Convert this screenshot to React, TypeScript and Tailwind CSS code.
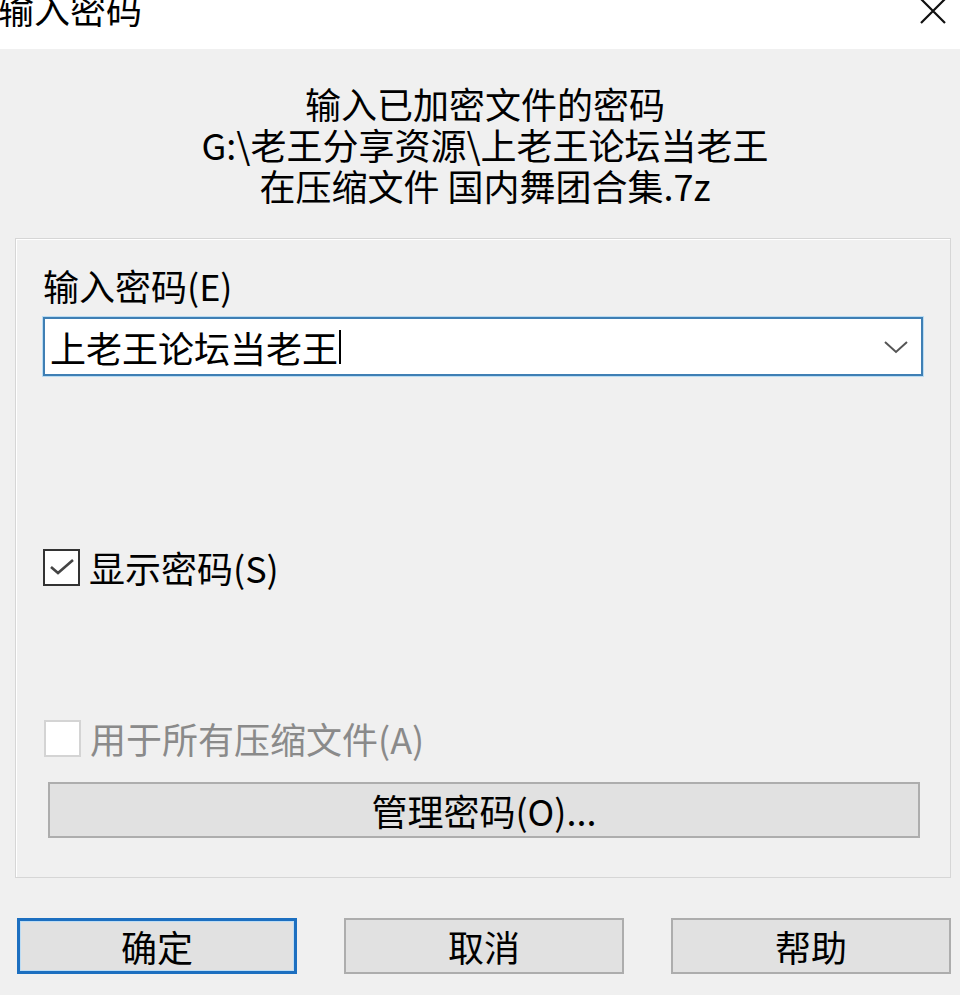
const font = { fontFamily: '"Noto Sans CJK SC", "Noto Sans", sans-serif' };

const Check = ({ checked, disabled }: { checked?: boolean; disabled?: boolean }) => (
    <div
        className={
            'w-[37px] h-[37px] shrink-0 bg-white flex items-center justify-center border-2 ' +
            (disabled ? 'border-[#d4d4d4]' : 'border-[#333]')
        }
    >
        {checked && (
            <svg width="30" height="30" viewBox="0 0 30 30">
                <path d="M4 15 L11 21 L26 8" fill="none" stroke="#444" strokeWidth="2.6" />
            </svg>
        )}
    </div>
);

const Btn = ({ label, primary }: { label: string; primary?: boolean }) => (
    <button
        className={
            'w-[280px] h-[56px] bg-[#e1e1e1] flex items-center justify-center text-[36px] leading-[40px] text-black ' +
            (primary
                ? 'border-[3px] border-[#1c6fc0] shadow-[inset_0_0_0_1px_#bcdcf4]'
                : 'border-2 border-[#adadad]')
        }
    >
        {label}
    </button>
);

export default function App() {
    return (
        <div className="w-[960px] h-[995px] bg-[#f0f0f0] overflow-hidden flex flex-col text-black" style={font}>
            {/* Title bar */}
            <div className="h-[49px] bg-white flex justify-between items-start shrink-0">
                <span className="text-[36px] leading-[40px] -mt-[12px] -ml-[2px]">输入密码</span>
                <svg width="28" height="28" viewBox="0 0 28 28" className="mr-[13px] -mt-[3px]">
                    <path d="M2 2 L26 26 M26 2 L2 26" stroke="#111" strokeWidth="2.2" />
                </svg>
            </div>

            {/* Header */}
            <div className="pt-[34px] pl-[10px] text-center text-[36px] leading-[41px]">
                <div>输入已加密文件的密码</div>
                <div>G:\老王分享资源\上老王论坛当老王</div>
                <div>在压缩文件 国内舞团合集.7z</div>
            </div>

            {/* Group box */}
            <div className="mt-[32px] ml-[15px] w-[936px] h-[640px] border border-[#d6d6d6] shadow-[inset_1px_1px_0_#ffffff] px-[27px] pt-[26px] flex flex-col">
                <div className="text-[36px] leading-[40px]">输入密码(E)</div>

                <div className="mt-[12px] h-[59px] w-full bg-white border-2 border-[#3f7fb4] shadow-[0_0_0_1px_#b9dcf3] flex items-center pl-[5px] pr-[12px]">
                    <span className="text-[36px] leading-[40px]">上老王论坛当老王</span>
                    <span className="w-[2px] h-[34px] bg-black ml-[1px]"></span>
                    <div className="flex-1"></div>
                    <svg width="26" height="16" viewBox="0 0 26 16">
                        <path d="M2 3 L13 13 L24 3" fill="none" stroke="#555" strokeWidth="2" />
                    </svg>
                </div>

                <div className="mt-[171px] flex items-center gap-[9px]">
                    <Check checked />
                    <span className="text-[36px] leading-[40px]">显示密码(S)</span>
                </div>

                <div className="mt-[131px] flex items-center gap-[9px] ml-[1px]">
                    <Check disabled />
                    <span className="text-[36px] leading-[40px] text-[#8a8a8a]">用于所有压缩文件(A)</span>
                </div>

                <button className="mt-[24px] ml-[5px] w-[872px] h-[56px] bg-[#e1e1e1] border-2 border-[#adadad] flex items-center justify-center text-[36px] leading-[40px]">
                    管理密码(O)...
                </button>
            </div>

            {/* Bottom buttons */}
            <div className="mt-[40px] ml-[17px] flex gap-[47px]">
                <Btn label="确定" primary />
                <Btn label="取消" />
                <Btn label="帮助" />
            </div>
        </div>
    );
}
